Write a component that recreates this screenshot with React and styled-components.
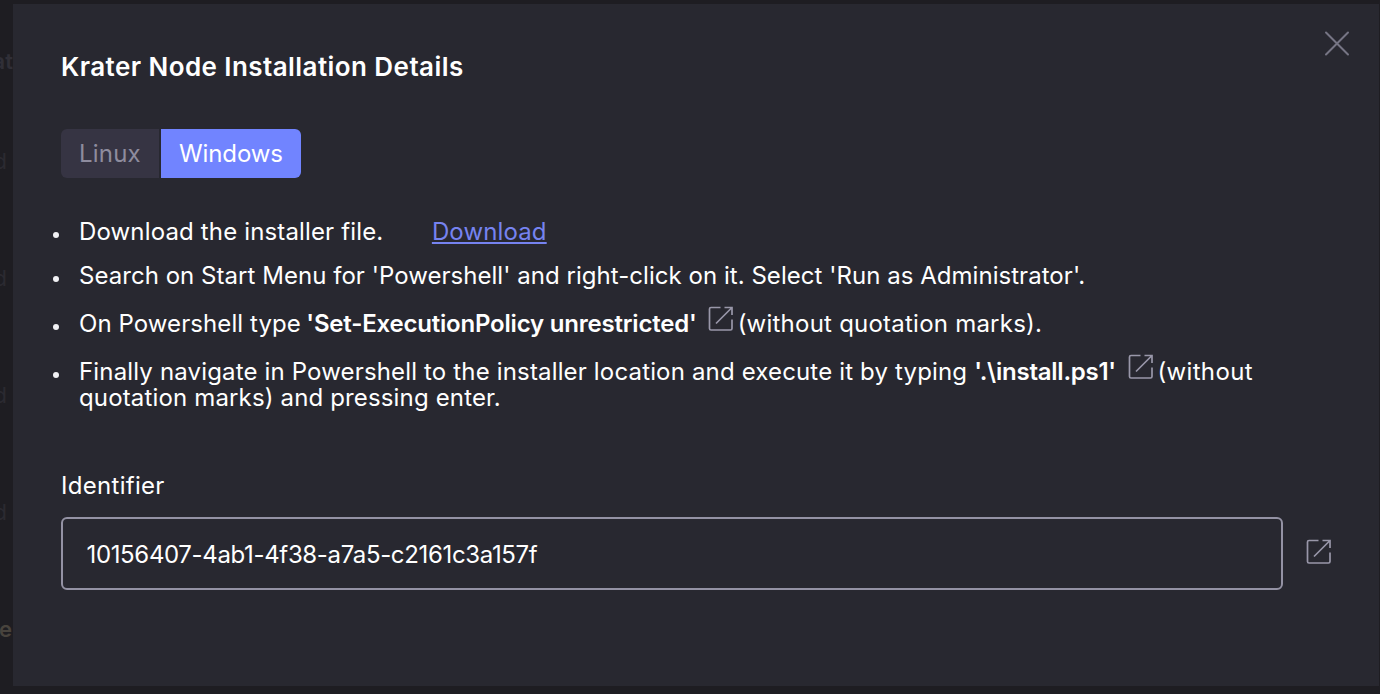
import React from 'react';
import styled, { createGlobalStyle } from 'styled-components';

const GlobalStyle = createGlobalStyle`
  * { box-sizing: border-box; }
  body {
    margin: 0;
    background: #1e1d22;
    color: #fff;
    font: 400 24px/26px Inter, "Liberation Sans", sans-serif;
    overflow: hidden;
  }
`;

const Page = styled.div`
  display: flex;
  width: 1380px;
  height: 694px;
  padding: 4px 1px 8px 0;
`;

const Backdrop = styled.aside`
  width: 13px;
  overflow: hidden;
  display: flex;
  flex-direction: column;
  align-items: flex-end;
  padding-top: 44px;
`;

const Remnant = styled.span`
  height: 26px;
  margin-bottom: ${(p) => p.$after || 0}px;
  margin-right: ${(p) => p.$inset || 0}px;
  color: ${(p) => p.$color || '#2b2a31'};
  font-size: 22px;
  font-weight: ${(p) => p.$weight || 400};
`;

const Panel = styled.main`
  flex: 1;
  background: #282830;
  padding: 0 29px 0 48px;
`;

const Header = styled.header`
  display: flex;
  justify-content: space-between;
  align-items: flex-start;
  height: 125px;
`;

const Title = styled.h1`
  margin: 50px 0 0;
  font-size: 26px;
  line-height: 26px;
  font-weight: 600;
  white-space: nowrap;
`;

const CloseButton = styled.button`
  display: flex;
  margin: 27px 0 0;
  padding: 0;
  border: 0;
  background: none;
  color: #767584;
`;

const Tabs = styled.div`
  display: flex;
  gap: 2px;
  width: 240px;
  height: 49px;
  border-radius: 6px;
  overflow: hidden;
`;

const Tab = styled.button`
  width: ${(p) => p.$width}px;
  padding: 0 0 0 18px;
  border: 0;
  font: inherit;
  text-align: left;
  color: ${(p) => (p.$active ? '#fff' : '#8e8c9e')};
  background: ${(p) => (p.$active ? '#7184ff' : '#363443')};
`;

const Steps = styled.ul`
  display: flex;
  flex-direction: column;
  gap: 22px;
  height: 192px;
  margin: 41px 0 0;
  padding: 0;
  list-style: none;
`;

const Step = styled.li`
  display: flex;
  margin-bottom: ${(p) => (p.$tight ? -4 : 0)}px;
  white-space: nowrap;
  &::before {
    content: '';
    flex: none;
    width: 6px;
    height: 6px;
    margin: 12.5px 20px 0 -8px;
    border-radius: 50%;
    background: #f2f2f5;
  }
`;

const Text = styled.span`
  letter-spacing: ${(p) => p.$track || 0}px;
`;

const Command = styled.strong`
  margin-left: ${(p) => p.$gap}px;
  font-weight: 600;
  letter-spacing: ${(p) => p.$track || 0}px;
`;

const DownloadLink = styled.a`
  margin-left: 48.5px;
  color: #7683f0;
  text-decoration: underline;
  text-decoration-thickness: 2px;
  text-underline-offset: 2px;
  text-decoration-skip-ink: none;
  letter-spacing: ${(p) => p.$track || 0}px;
`;

const CopyButton = styled.button`
  display: inline-flex;
  vertical-align: top;
  margin: ${(p) => p.$margin};
  padding: 0;
  border: 0;
  background: none;
  color: #9997a9;
`;

const Label = styled.label`
  display: block;
  margin-top: 62px;
`;

const Field = styled.div`
  display: flex;
  margin-top: 18px;
`;

const Value = styled.output`
  width: 1222px;
  height: 73px;
  padding: 23px 23.5px;
  border: 2px solid #9492a4;
  border-radius: 6px;
`;

const OpenIcon = () => (
  <svg width="26" height="26" viewBox="0 0 26 26" fill="none" stroke="currentColor" strokeWidth="1.7">
    <path d="M12.5 1.5H3Q1.5 1.5 1.5 3V22.5Q1.5 24 3 24H22.5Q24 24 24 22.5V13.5M16.5 1.5H24V9M24 1.5L8 17.5" />
  </svg>
);

const CloseIcon = () => (
  <svg width="26" height="26" viewBox="0 0 26 26" stroke="currentColor" strokeWidth="2" strokeLinecap="round">
    <path d="M2 1.5L24 23.5M24 1.5L2 23.5" />
  </svg>
);

export default function App() {
  return (
    <>
      <GlobalStyle />
      <Page>
        <Backdrop>
          <Remnant $after={74} $weight={600} $color="#302f37">at</Remnant>
          <Remnant $after={91} $inset={6}>d</Remnant>
          <Remnant $after={91} $inset={6}>d</Remnant>
          <Remnant $after={91} $inset={6}>d</Remnant>
          <Remnant $after={91} $inset={6}>d</Remnant>
          <Remnant $inset={1} $weight={600} $color="#48433d">e</Remnant>
        </Backdrop>
        <Panel>
          <Header>
            <Title><Text $track={0.43}>Krater Node Installation Details</Text></Title>
            <CloseButton aria-label="Close"><CloseIcon /></CloseButton>
          </Header>
          <Tabs>
            <Tab $width={98}><Text $track={0.2}>Linux</Text></Tab>
            <Tab $width={140} $active><Text $track={-0.1}>Windows</Text></Tab>
          </Tabs>
          <Steps>
            <Step $tight>
              <Text $track={0.15}>Download the installer file.</Text>
              <DownloadLink $track={0.14}>Download</DownloadLink>
            </Step>
            <Step>
              <Text $track={0.04}>Search on Start Menu for 'Powershell' and right-click on it. Select 'Run as Administrator'.</Text>
            </Step>
            <Step>
              <Text $track={0.08}>On Powershell type</Text>
              <Command $gap={5.5} $track={-0.2}>'Set-ExecutionPolicy unrestricted'</Command>
              <CopyButton $margin="-5px 4px 0 11px" aria-label="Copy"><OpenIcon /></CopyButton>
              <Text $track={0.23}>(without quotation marks).</Text>
            </Step>
            <Step>
              <div>
                <Text $track={0.16}>Finally navigate in Powershell to the installer location and execute it by typing</Text>
                <Command $gap={7} $track={-0.25}>'.\install.ps1'</Command>
                <CopyButton $margin="-5px 3px 0 12.5px" aria-label="Copy"><OpenIcon /></CopyButton>
                <Text $track={0.35}>(without</Text>
                <br />
                <Text $track={0.15}>quotation marks) and pressing enter.</Text>
              </div>
            </Step>
          </Steps>
          <Label><Text $track={0.3}>Identifier</Text></Label>
          <Field>
            <Value><Text $track={-0.35}>10156407-4ab1-4f38-a7a5-c2161c3a157f</Text></Value>
            <CopyButton $margin="21.5px 0 0 23px" aria-label="Copy"><OpenIcon /></CopyButton>
          </Field>
        </Panel>
      </Page>
    </>
  );
}
